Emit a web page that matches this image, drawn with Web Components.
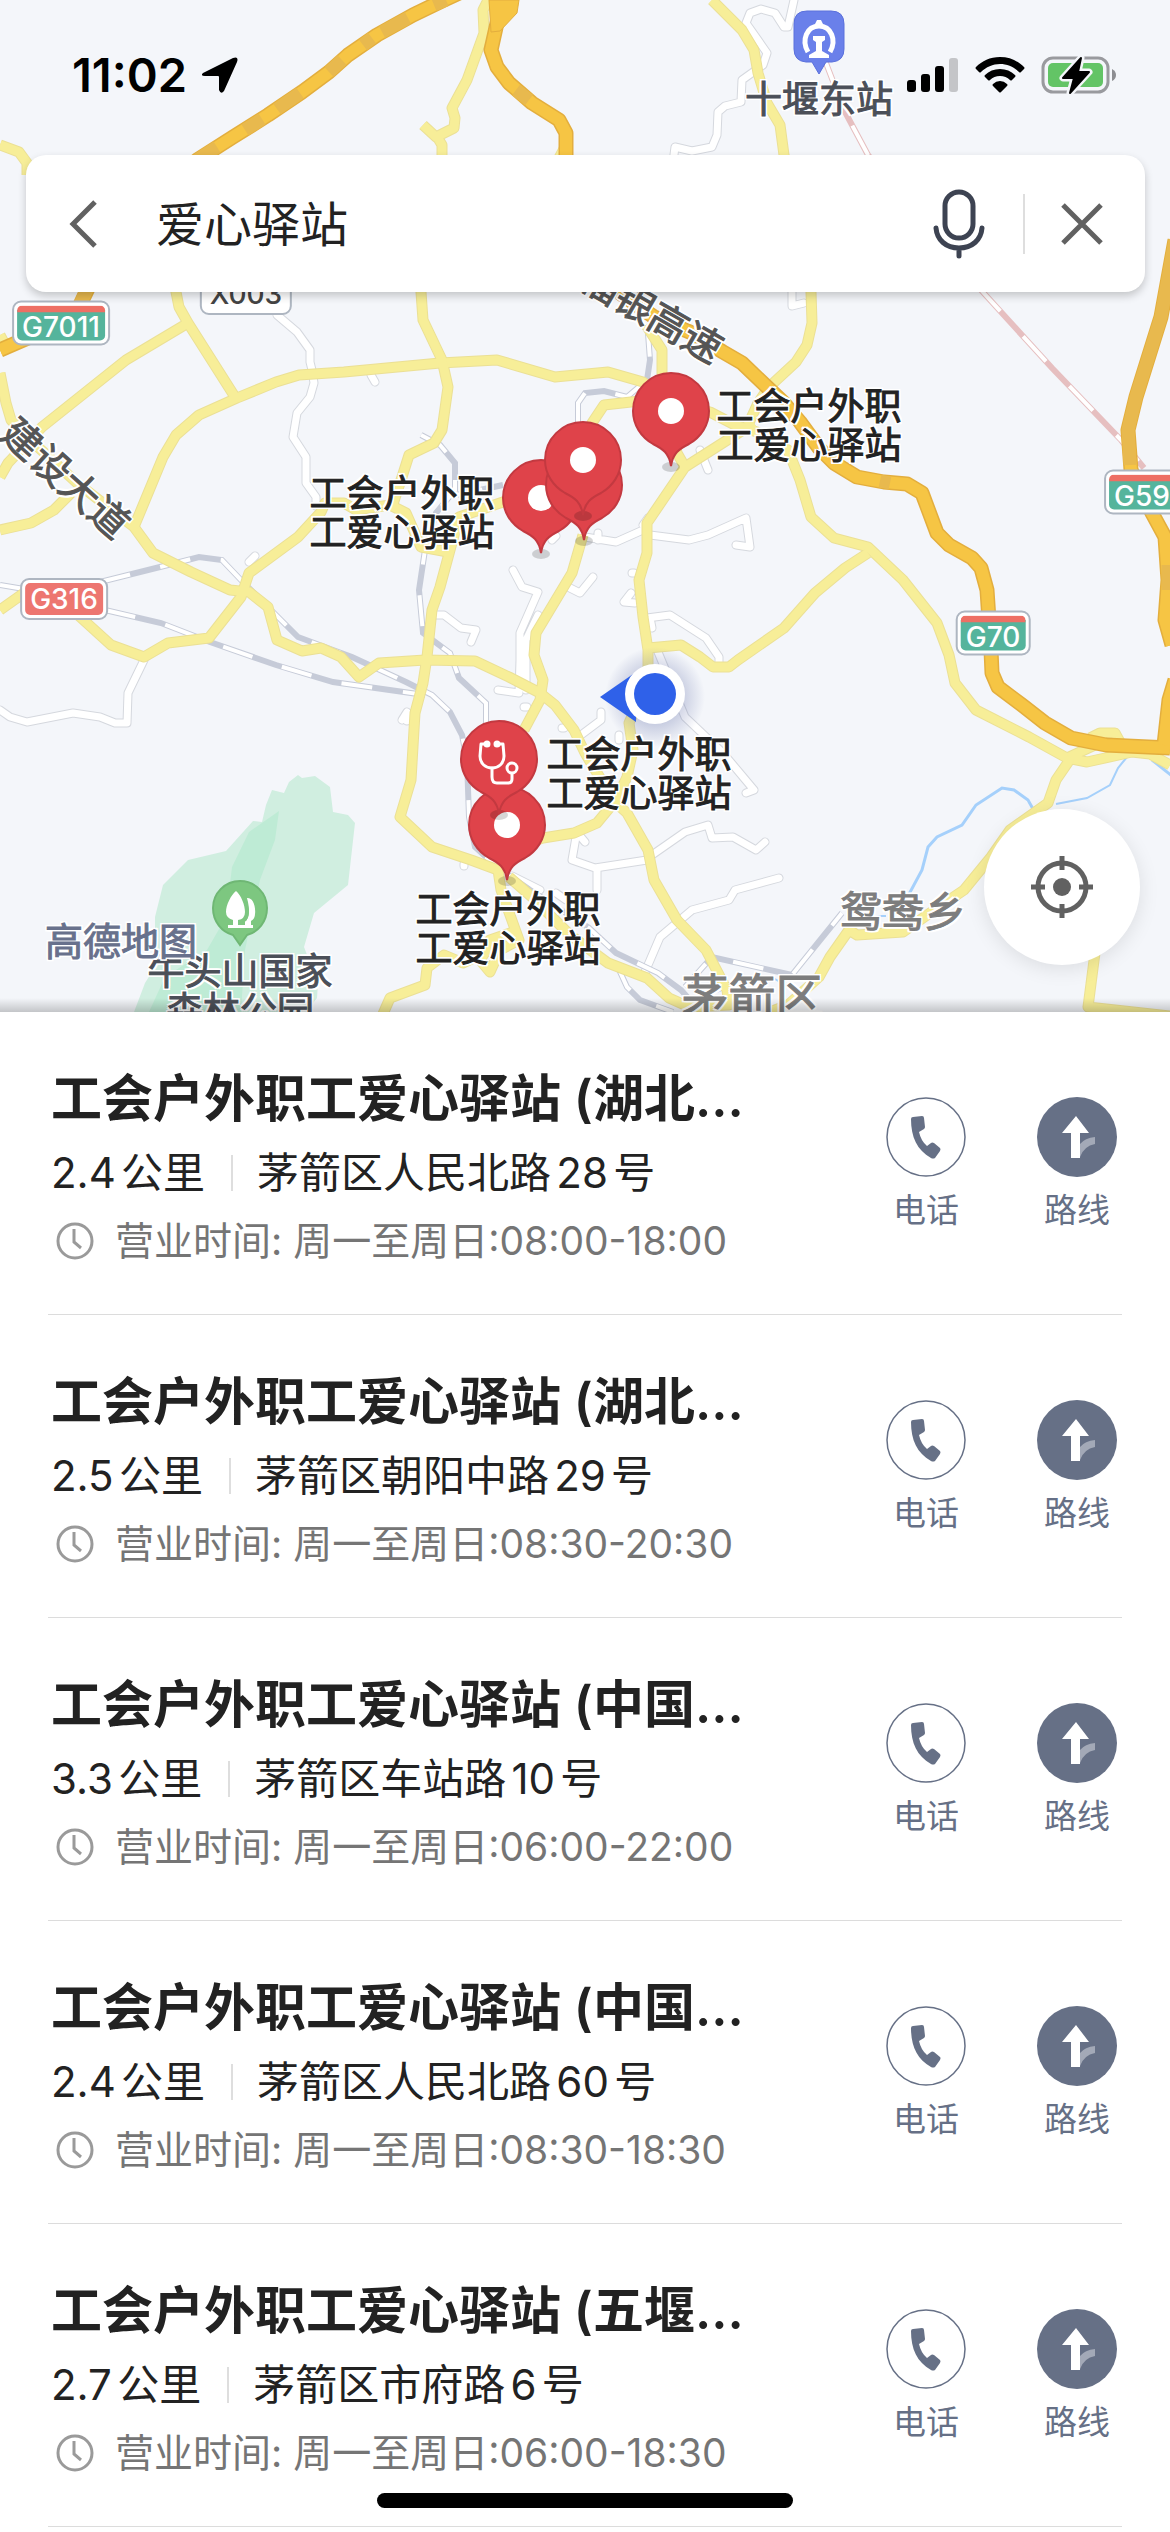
<!DOCTYPE html>
<html lang="zh-CN">
<head>
<meta charset="utf-8">
<meta name="viewport" content="width=device-width, initial-scale=1">
<title>爱心驿站</title>
<style>
    html {
        background: #fff;
    }

    body {
        margin: 0;
        font-family: Inter, "Noto Sans CJK SC", sans-serif;
        color: #222;
    }
</style>
</head>
<body>
<nearby-app></nearby-app>

<template id="map-art">
    <svg viewBox="0 0 1170 1012" preserveAspectRatio="xMidYMin slice" aria-hidden="true">
        <defs>
            <g id="lanes">
                <path d="M794 0L788 27H784L775 13L761 9L750 13L746 23L767 53L763 65L742 80L741 102L725 106L718 112L717 135L712 147L692 151L675 147L672 170"/>
                <path d="M792 270V306L804 303"/>
                <path d="M277 315L297 332L310 350V362L312 370L314 383L310 397L297 413L293 437L306 457V483L316 497V506"/>
                <path d="M371 375L375 382"/>
                <path d="M513 570L522 587L538 592L520 633V660L519 693L498 690M538 615L526 640V690M527 707H524"/>
                <path d="M570 588L580 593L593 577M552 540L556 536"/>
                <path d="M436 615H444L461 628L476 630L471 642M402 720L407 712V721"/>
                <path d="M144 660L128 693L127 723H115L100 717L73 713L27 722L10 717L0 710"/>
                <path d="M585 537L616 542L643 530L650 535L689 540L708 535L746 518L750 547L736 545M598 533V540M700 450L708 470M643 525L648 518"/>
                <path d="M647 618L670 615L706 638L719 657V667M650 618L652 628M631 593L624 602L635 603M634 573H632"/>
                <path d="M658 652L685 717L723 753L754 790L746 793M581 735L601 720V712M619 740V735M562 728H564"/>
                <path d="M652 855L685 832L708 825L712 838L733 837L756 850L765 842"/>
                <path d="M645 972L660 937L692 910L729 900L735 890L779 878"/>
                <path d="M576 837L572 860L595 868L647 860M597 868V890M580 836L585 842M464 864V866M512 876L540 890M556 893L566 900M249 562L255 556"/>
            </g>
            <g id="rails">
                <path d="M0 585L24 589M100 582L168 565L199 557L222 560L241 580L268 607L298 637L333 650L352 657L406 682L432 695L450 712L462 735L467 760L469 817L475 847L497 867L530 890L589 928L616 953L658 973L681 990L690 1000"/>
                <path d="M105 610L161 623L210 642L276 665L333 682L425 695"/>
                <path d="M421 435L440 445L455 463V490L436 513L425 550L419 590L423 633L450 653L459 678L486 703V723M452 496L503 485"/>
                <path d="M578 422V403L585 393L604 391L627 397L647 380L650 360L648 333"/>
                <path d="M685 987L712 957L792 975L842 913M616 963L627 987L640 1000L673 1012"/>
            </g>
            <g id="roads">
                <path d="M488 0L483 10L484 33L467 80L452 108L455 118L454 128L436 137L423 125M436 135L442 145V165"/>
                <path d="M0 145L19 152L27 163V175M559 158L566 145"/>
                <path d="M712 0L742 30L754 50L758 73L767 103L780 125L784 155L800 230L811 292L812 323L807 345L796 362L769 387L758 403L748 425"/>
                <path d="M172 270L176 292L179 307L188 323L235 397M188 323L126 360L42 427L8 463L0 477M0 530L31 523L54 510L71 493M0 335L8 350"/>
                <path d="M0 373L6 403L11 420L38 447L77 483L134 527L153 553L191 572L230 590L249 592L268 607L277 640L302 651L321 648L341 657L359 677L379 663L425 660L475 661L509 677L540 693L555 705L574 730L585 753L597 773L616 803L627 813L648 850L654 880L677 920L706 950L727 990L729 1005L690 1007"/>
                <path d="M0 610L24 593M78 615L111 645L144 657L168 643L209 638L241 597L249 573L298 537L321 512L325 503H344L356 510L390 505L406 513L421 547L448 552"/>
                <path d="M134 527L163 457L176 435L199 415L237 398L276 382L299 375L344 372L440 363L497 360L555 377L608 372L643 382L665 400L710 412L735 425L757 432L788 450L800 480L811 517L834 538L868 547L903 580L937 623L949 655L955 683L976 710L1029 737L1067 758L1087 762L1132 752L1150 754L1170 765M1067 758L1095 745"/>
                <path d="M421 280V292L423 320L442 360L448 387L442 430L434 443L409 455L402 477L392 507"/>
                <path d="M560 480L503 502L459 517L450 550L440 587L432 610L427 657L423 683L415 713L411 780L400 817L432 847L471 860L498 870L501 890L519 940L500 950L490 972L480 960L490 945V940L519 930"/>
                <path d="M509 877L532 897L570 935L608 963L647 978L669 998L696 1010"/>
                <path d="M480 955L463 963L444 955L427 968L425 985L390 998L383 1014"/>
                <path d="M583 535L572 573L536 633L534 655L543 680L540 700L524 730"/>
                <path d="M583 490L592 423L604 405L640 401"/>
                <path d="M646 325L662 350V373L677 453L685 467L754 423M685 467L647 523V553L639 580L643 617L648 650V680L629 723L633 750L627 777L616 800L597 823L574 833L543 838L520 845"/>
                <path d="M648 648L681 645L700 657L713 667H729L738 660L784 628L815 593L845 568L868 553"/>
                <path d="M1071 758L1056 780L1048 803L1010 830L991 857L964 890L930 913L903 932L857 935L849 930L830 957L819 977L788 1005L770 1012"/>
                <path d="M1096 945L1088 1007L1170 1016M1090 738L1100 733H1115L1120 742"/>
            </g>
            <g id="highways">
                <path d="M80 305L92 280L197 160L233 137L268 115L302 92L329 72L348 55L377 35L413 15L444 0L470 -12"/>
                <path d="M0 350L30 337"/>
                <path d="M503 -5L497 23L491 50L497 67L509 83L532 103L559 120L566 133V160L580 250L620 293L654 317L692 333L723 352L742 363L765 385L784 403L800 422L819 448L834 463L857 477L884 482L907 484L922 493L937 533L949 545L972 558L981 568L987 590L991 650L992 673L998 687L1022 705L1045 723L1071 738L1106 745L1170 748"/>
                <path d="M1175 240L1161 317L1136 397L1128 430L1131 470L1152 513L1165 537L1168 580L1165 620L1172 645M1175 680L1169 700L1164 745"/>
            </g>
            <path id="express-rail" d="M826 63L844 110L868 155L981 290L1052 368L1121 440L1144 468"/>
        </defs>

        <rect width="1170" height="1012" fill="#f4f6fa"/>
        <path fill="#d0eee0" d="M298 775L302 778L315 776L330 787L333 812L348 815L355 823L348 885L314 913L304 947L318 983L317 998L306 1012H134L145 983L155 967V917L163 885L188 860L226 851L253 821L262 822L266 805L272 790L284 793L289 782Z"/>
        <path fill="#beebd5" d="M279 811L275 840L260 880L245 950L241 1012H149L165 977L207 950L226 917L232 867L249 832Z"/>
        <g fill="none" stroke="#a5d0fb" stroke-width="3">
            <path d="M908 896L922 870L928 847L937 837L962 825L976 805L1002 788L1014 790L1028 800L1033 809"/>
            <path stroke-width="2" d="M1056 804L1087 798L1110 785L1118 768L1127 757M870 916H886M775 979L780 982M714 993L724 989"/>
            <path d="M1152 760L1172 776"/>
        </g>
        <g fill="none" stroke-linejoin="round" stroke-linecap="round">
            <use href="#lanes" stroke="#d5d8de" stroke-width="9"/>
            <use href="#lanes" stroke="#fff" stroke-width="7"/>
        </g>
        <g fill="none">
            <use href="#rails" stroke="#c6cbd8" stroke-width="6"/>
            <use href="#rails" stroke="#fff" stroke-width="4" stroke-dasharray="31 31"/>
            <use href="#express-rail" stroke="#e6bfc0" stroke-width="6"/>
            <use href="#express-rail" stroke="#fff" stroke-width="4" stroke-dasharray="34 34"/>
        </g>
        <g fill="none" stroke-linejoin="round">
            <use href="#roads" stroke="#ebe095" stroke-width="11"/>
            <use href="#roads" stroke="#f7ee98" stroke-width="9"/>
            <use href="#highways" stroke="#e3ae3e" stroke-width="15"/>
            <use href="#highways" stroke="#f6c544" stroke-width="12"/>
        </g>
        <path fill="#f6c544" stroke="#e3ae3e" d="M489 0H519L517 13L500 31L491 32Z"/>
        <g fill="none" stroke="#e8b94e" stroke-width="13">
            <path d="M197 160L217 147M245 130L262 119M277 109L300 93M329 72L342 60M363 45L372 38M382 32L408 18M434 5L446 0"/>
            <path d="M516 90L529 100M880 481L890 483M80 305L88 285M1175 240L1161 317L1136 397L1128 430L1130 465M1168 565V590"/>
        </g>
    </svg>
</template>

<script>
    // Map items are given in the units of the map drawing.
    const MAP_WIDTH = 1170;
    const MAP_HEIGHT = 1012;

    const PLACES = [
        {name: '工会户外职工爱心驿站 (湖北...', distance: '2.4公里', address: '茅箭区人民北路28号', hours: '08:00-18:00'},
        {name: '工会户外职工爱心驿站 (湖北...', distance: '2.5公里', address: '茅箭区朝阳中路29号', hours: '08:30-20:30'},
        {name: '工会户外职工爱心驿站 (中国...', distance: '3.3公里', address: '茅箭区车站路10号', hours: '06:00-22:00'},
        {name: '工会户外职工爱心驿站 (中国...', distance: '2.4公里', address: '茅箭区人民北路60号', hours: '08:30-18:30'},
        {name: '工会户外职工爱心驿站 (五堰...', distance: '2.7公里', address: '茅箭区市府路6号', hours: '06:00-18:30'}
    ];

    // Base for everything that is pinned to a point of the map.
    class MapItem extends HTMLElement {
        connectedCallback(){
            this.style.left = `${this.getAttribute('x') / MAP_WIDTH * 100}%`;
            this.style.top = `${this.getAttribute('y') / MAP_HEIGHT * 100}%`;
        }
    }

    class MapLabel extends MapItem {
        constructor(){
            super();
            this.attachShadow({mode: 'open'});
            this.shadowRoot.innerHTML = `
            <style>
                :host {
                    position: absolute;
                    transform: translate(-50%, -50%) rotate(var(--turn, 0deg));
                    font-size: 37px;
                    line-height: 39px;
                    color: #222;
                    text-align: center;
                    white-space: nowrap;
                    -webkit-text-stroke: 1px currentColor;
                    text-shadow: 2px 0 #fff, -2px 0 #fff, 0 2px #fff, 0 -2px #fff,
                        2px 2px #fff, -2px 2px #fff, 2px -2px #fff, -2px -2px #fff;
                }

                :host([kind=place]) {
                    color: #4b4f58;
                }

                :host([kind=road]) {
                    color: #555;
                    font-size: 39px;
                }

                :host([kind=town]) {
                    color: #7d7d7d;
                    font-size: 42px;
                }

                :host([kind=district]) {
                    color: #7d7d7d;
                    font-size: 47px;
                }

                :host([kind=brand]) {
                    color: #68718c;
                    font-size: 38px;
                }
            </style>
            <slot></slot>`;
        }
    }

    class MapPin extends MapItem {
        constructor(){
            super();
            this.attachShadow({mode: 'open'});
            this.shadowRoot.innerHTML = `
            <style>
                :host {
                    position: absolute;
                    width: 80px;
                    height: 102px;
                    transform: translate(-50%, -96px);
                }

                svg {
                    display: block;
                }

                :host([icon=care]) .dot {
                    display: none;
                }

                :host(:not([icon=care])) .care {
                    display: none;
                }
            </style>
            <svg width="80" height="102" viewBox="0 0 80 102" aria-hidden="true">
                <ellipse cx="40" cy="96" rx="9" ry="5" fill="#000" fill-opacity=".16"/>
                <path fill="#df434a" stroke="#c33940" stroke-width="2" d="M40 95C38 82 32 78 22 73C10 66 2 54 2 40A38 38 0 0 1 78 40C78 54 70 66 58 73C48 78 42 82 40 95Z"/>
                <circle class="dot" cx="40" cy="40" r="13" fill="#fff"/>
                <g class="care" fill="none" stroke="#fff" stroke-width="3" stroke-linecap="round" stroke-linejoin="round">
                    <path d="M27 25H22L21 37C21 45 27 49 33 49S45 45 45 37L44 25H39"/>
                    <circle cx="28" cy="25" r="2" fill="#fff"/>
                    <circle cx="38" cy="25" r="2" fill="#fff"/>
                    <path d="M33 49V58Q33 64 38 64H49Q53 64 53 60V55"/>
                    <circle cx="53" cy="49" r="5"/>
                </g>
            </svg>`;
        }
    }

    class RoadShield extends MapItem {
        constructor(){
            super();
            this.attachShadow({mode: 'open'});
            this.shadowRoot.innerHTML = `
            <style>
                :host {
                    position: absolute;
                    transform: translate(-50%, -50%);
                    padding: 3px;
                    border: 2px solid #aeb6c1;
                    border-radius: 9px;
                    background: #fff;
                }

                span {
                    display: block;
                    padding: 0 5px;
                    border-radius: 5px;
                    font-size: 28px;
                    line-height: 32px;
                    font-weight: 500;
                    color: #fff;
                    background: #ed7670;
                }

                :host([kind=express]) span {
                    border-top: 7px solid #ee6f64;
                    line-height: 28px;
                    background: #55b49c;
                }

                :host([kind=county]) span {
                    color: #444;
                    background: #fff;
                }
            </style>
            <span><slot></slot></span>`;
        }
    }

    class MapSpot extends MapItem {
        constructor(){
            super();
            this.attachShadow({mode: 'open'});
            this.shadowRoot.innerHTML = `
            <style>
                :host {
                    position: absolute;
                    transform: translate(-50%, -50%);
                }

                ::slotted(svg) {
                    display: block;
                }
            </style>
            <slot></slot>`;
        }
    }

    class MapView extends HTMLElement {
        constructor(){
            super();
            this.attachShadow({mode: 'open'});
            this.shadowRoot.innerHTML = `
            <style>
                :host {
                    display: block;
                    position: relative;
                    overflow: hidden;
                    aspect-ratio: ${MAP_WIDTH} / ${MAP_HEIGHT};
                }

                .art > svg {
                    display: block;
                    width: 100%;
                }

                .edge {
                    position: absolute;
                    inset: auto 0 0;
                    height: 14px;
                    background: linear-gradient(transparent, rgba(0,0,0,0.2));
                }

                button {
                    display: grid;
                    place-items: center;
                    width: 156px;
                    height: 156px;
                    padding: 0;
                    border: 0;
                    border-radius: 50%;
                    background: #fff;
                    box-shadow: 0 4px 20px rgba(0,0,0,0.1);
                }
            </style>
            <div class="art"></div>
            <map-label kind="road" x="66" y="478" style="--turn: 42deg">建设大道</map-label>
            <map-label kind="road" x="652" y="313" style="--turn: 30deg">福银高速</map-label>
            <road-shield kind="express" x="61" y="323">G7011</road-shield>
            <road-shield kind="county" x="246" y="294">X003</road-shield>
            <road-shield x="64" y="599">G316</road-shield>
            <road-shield kind="express" x="1142" y="492">G59</road-shield>
            <road-shield kind="express" x="993" y="633">G70</road-shield>
            <map-label kind="town" x="903" y="911">鸳鸯乡</map-label>
            <map-label kind="district" x="752" y="995">茅箭区</map-label>
            <map-label kind="place" x="819" y="99">十堰东站</map-label>
            <map-spot x="819" y="43">
                <svg width="52" height="66" viewBox="0 0 52 66" aria-hidden="true">
                    <path fill="#6a80ea" stroke="#5a70dc" d="M14 1H38Q51 1 51 14V39Q51 51 39 52H33L26 64L19 52H13Q1 51 1 39V14Q1 1 14 1Z"/>
                    <path fill="none" stroke="#fff" stroke-width="5" d="M15 42C8 30 14 16 26 16S44 30 37 42"/>
                    <path fill="#fff" d="M21 16L24 10H28L31 16ZM20 26H32V30L29 32V41L36 45V48H16V45L23 41V32L20 30Z"/>
                </svg>
            </map-spot>
            <map-label kind="place" x="240" y="991">牛头山国家<br>森林公园</map-label>
            <map-label kind="brand" x="121" y="941">高德地图</map-label>
            <map-spot x="240" y="913">
                <svg width="56" height="68" viewBox="0 0 56 68" aria-hidden="true">
                    <path fill="#7dc780" stroke="#6fb774" stroke-width="2" d="M28 66L21 56C10 53 1 43 1 29A27 27 0 0 1 55 29C55 43 46 53 35 56Z"/>
                    <path fill="#fff" d="M24 12C29 16 33 26 33 33Q33 40 26 41V46H33V42C38 40 38 30 35 19C41 18 44 28 43 35Q43 40 39 42V46H41V49H16V46H21V41Q14 39 14 33C14 26 19 16 24 12Z"/>
                    <path fill="none" stroke="#7dc780" stroke-width="2" d="M32 19C36 27 37 36 33 42"/>
                </svg>
            </map-spot>
            <map-spot x="649" y="694">
                <svg width="140" height="120" viewBox="0 0 140 120" aria-hidden="true">
                    <radialGradient id="glow">
                        <stop offset=".5" stop-color="#5562a0" stop-opacity=".3"/>
                        <stop offset="1" stop-color="#5562a0" stop-opacity="0"/>
                    </radialGradient>
                    <circle cx="76" cy="63" r="50" fill="url(#glow)"/>
                    <path fill="#2f61e9" d="M21 63L57 38V88Z"/>
                    <circle cx="76" cy="60" r="30" fill="#fff"/>
                    <circle cx="76" cy="60" r="21" fill="#2f61e9"/>
                </svg>
            </map-spot>
            <map-pin x="541" y="554"></map-pin>
            <map-pin x="584" y="541"></map-pin>
            <map-pin x="583" y="516"></map-pin>
            <map-pin x="671" y="467"></map-pin>
            <map-pin x="507" y="881"></map-pin>
            <map-pin x="499" y="815" icon="care"></map-pin>
            <map-label x="809" y="426">工会户外职<br>工爱心驿站</map-label>
            <map-label x="402" y="513">工会户外职<br>工爱心驿站</map-label>
            <map-label x="639" y="774">工会户外职<br>工爱心驿站</map-label>
            <map-label x="508" y="929">工会户外职<br>工爱心驿站</map-label>
            <map-spot x="1062" y="887">
                <button type="button" aria-label="定位">
                    <svg width="64" height="64" viewBox="0 0 64 64" fill="none" stroke="#616161" stroke-width="5" aria-hidden="true">
                        <circle cx="32" cy="32" r="24"/>
                        <path d="M32 1V15M32 49V63M1 32H15M49 32H63"/>
                        <circle cx="32" cy="32" r="9" fill="#616161" stroke="none"/>
                    </svg>
                </button>
            </map-spot>
            <div class="edge"></div>`;
            const art = document.querySelector('#map-art').content.cloneNode(true);
            this.shadowRoot.querySelector('.art').appendChild(art);
        }
    }

    class StatusBar extends HTMLElement {
        constructor(){
            super();
            this.attachShadow({mode: 'open'});
            this.shadowRoot.innerHTML = `
            <style>
                :host {
                    display: flex;
                    align-items: center;
                    height: 149px;
                    padding: 0 53px 0 72px;
                    color: #000;
                }

                time {
                    font-size: 47px;
                    line-height: 56px;
                    font-weight: 600;
                }

                .arrow {
                    margin: 0 auto 0 14px;
                }

                .signal,
                .wifi {
                    margin-right: 16px;
                }
            </style>
            <time>11:02</time>
            <svg class="arrow" width="38" height="38" viewBox="0 0 38 38" aria-hidden="true">
                <path d="M2 17L32 2Q38 0 36 6L23 35Q20 39 18 34V21Q18 20 17 20H4Q-1 20 2 17Z"/>
            </svg>
            <svg class="signal" width="52" height="36" viewBox="0 0 52 36" aria-hidden="true">
                <rect y="23" width="9" height="12" rx="3"/>
                <rect x="14" y="17" width="9" height="18" rx="3"/>
                <rect x="28" y="9" width="9" height="26" rx="3"/>
                <rect x="42" y="1" width="9" height="34" rx="3" fill="#c4c5c8"/>
            </svg>
            <svg class="wifi" width="50" height="38" viewBox="0 0 50 38" aria-hidden="true">
                <path d="M25 1C35 1 43 5 49 11Q50 12 49 13L46 16Q45 17 44 16C39 11 32 8 25 8S11 11 6 16Q5 17 4 16L1 13Q0 12 1 11C7 5 15 1 25 1ZM25 13C31 13 36 15 40 19Q41 20 40 21L37 24Q36 25 35 24Q31 20 25 20T15 24Q14 25 13 24L10 21Q9 20 10 19C14 15 19 13 25 13ZM25 25Q29 25 32 28Q33 29 32 30L26 36Q25 37 24 36L18 30Q17 29 18 28Q21 25 25 25Z"/>
            </svg>
            <svg width="76" height="44" viewBox="0 0 76 44" aria-hidden="true">
                <rect x="2" y="5" width="65" height="34" rx="10" fill="none" stroke="#999a9e" stroke-width="3"/>
                <path fill="#8d8e92" d="M71 16Q75 18 75 22T71 28Z"/>
                <rect x="7" y="10" width="55" height="24" rx="5" fill="#63c466"/>
                <path stroke="#f4f6fa" stroke-width="7" stroke-linejoin="round" d="M40 5L22 25H33L29 40L48 19H37Z"/>
                <path stroke="#000" stroke-width="2" stroke-linejoin="round" d="M40 5L22 25H33L29 40L48 19H37Z"/>
            </svg>`;
        }
    }

    class SearchBar extends HTMLElement {
        constructor(){
            super();
            this.attachShadow({mode: 'open'});
            this.shadowRoot.innerHTML = `
            <style>
                :host {
                    display: flex;
                    align-items: center;
                    height: 137px;
                    margin: 6px 25px 0 26px;
                    padding-right: 6px;
                    box-sizing: border-box;
                    border-radius: 20px;
                    background: #fff;
                    box-shadow: 0 4px 8px rgba(0,0,0,0.2);
                }

                button {
                    display: grid;
                    place-items: center;
                    flex: none;
                    width: 114px;
                    height: 100%;
                    padding: 0;
                    border: 0;
                    background: none;
                }

                .voice {
                    width: 128px;
                }

                input {
                    flex: 1;
                    min-width: 0;
                    height: 80px;
                    padding: 0 16px 6px;
                    box-sizing: border-box;
                    border: 0;
                    outline: 0;
                    background: none;
                    font: inherit;
                    font-size: 48px;
                    color: #222;
                }

                i {
                    width: 2px;
                    height: 60px;
                    background: #dedede;
                }
            </style>
            <button type="button" aria-label="返回">
                <svg width="30" height="50" viewBox="0 0 30 50" fill="none" stroke="#616161" stroke-width="5" aria-hidden="true">
                    <path d="M27 3L5 25L27 47"/>
                </svg>
            </button>
            <input type="text" aria-label="搜索" value="爱心驿站">
            <button class="voice" type="button" aria-label="语音">
                <svg width="52" height="70" viewBox="0 0 52 70" fill="none" stroke="#3d4352" stroke-width="5" stroke-linecap="round" aria-hidden="true">
                    <rect x="12" y="3" width="28" height="46" rx="14"/>
                    <path d="M3 39C4 51 13 59 26 59S48 51 49 39M26 59V67"/>
                </svg>
            </button>
            <i></i>
            <button type="button" aria-label="清除">
                <svg width="42" height="42" viewBox="0 0 42 42" fill="none" stroke="#616161" stroke-width="5" aria-hidden="true">
                    <path d="M2 2L40 40M40 2L2 40"/>
                </svg>
            </button>`;
        }
    }

    class IconAction extends HTMLElement {
        constructor(){
            super();
            this.attachShadow({mode: 'open'});
            this.shadowRoot.innerHTML = `
            <style>
                :host {
                    display: block;
                }

                button {
                    display: flex;
                    flex-direction: column;
                    align-items: center;
                    gap: 11px;
                    width: 80px;
                    padding: 0;
                    border: 0;
                    background: none;
                    font: inherit;
                    font-size: 33px;
                    line-height: 44px;
                    color: #667086;
                }

                svg {
                    display: block;
                }

                :host([kind=call]) .route,
                :host([kind=route]) .call {
                    display: none;
                }
            </style>
            <button type="button">
                <svg class="call" width="80" height="80" viewBox="0 0 80 80" aria-hidden="true">
                    <circle cx="40" cy="40" r="39" fill="none" stroke="#667086" stroke-width="1.5"/>
                    <path fill="#667086" d="M27 20L36 19Q38 19 38 21L39 30Q39 31 38 32L33 35Q35 44 41 49L45 46Q46 45 48 46L54 51Q55 52 54 54L49 61Q47 62 45 61C31 53 25 40 25 22Q25 20 27 20Z"/>
                </svg>
                <svg class="route" width="80" height="80" viewBox="0 0 80 80" aria-hidden="true">
                    <circle cx="40" cy="40" r="40" fill="#667086"/>
                    <path fill="#a3a9b7" d="M43 47Q48 41 58 40V47Q47 49 43 60Z"/>
                    <path fill="#fff" d="M39 19L52 36H43V61H34V36H25Z"/>
                </svg>
                <slot></slot>
            </button>`;
        }
    }

    class PlaceCard extends HTMLElement {
        constructor(){
            super();
            this.attachShadow({mode: 'open'});
            this.shadowRoot.innerHTML = `
            <style>
                :host {
                    display: flex;
                    justify-content: space-between;
                    margin: 0 48px;
                    padding: 53px 5px 45px 3px;
                    border-bottom: 1px solid #dcdcdc;
                }

                .info {
                    display: flex;
                    flex-direction: column;
                    gap: 12px;
                    min-width: 0;
                }

                h2 {
                    margin: 0;
                    font-size: 51px;
                    line-height: 68px;
                    font-weight: 600;
                    white-space: nowrap;
                }

                p {
                    display: flex;
                    align-items: center;
                    margin: 0;
                    font-size: 42px;
                    line-height: 56px;
                    white-space: nowrap;
                    text-autospace: normal;
                }

                .distance {
                    margin-right: 24px;
                    padding-right: 26px;
                    line-height: 36px;
                    border-right: 2px solid #dedede;
                }

                .hours {
                    gap: 21px;
                    font-size: 39px;
                    color: #757575;
                    text-autospace: no-autospace;
                }

                .hours svg {
                    margin-left: 5px;
                }

                .actions {
                    display: flex;
                    gap: 71px;
                    padding-top: 32px;
                }
            </style>
            <div class="info">
                <h2><slot name="name"></slot></h2>
                <p><span class="distance"><slot name="distance"></slot></span><slot name="address"></slot></p>
                <p class="hours">
                    <svg width="38" height="38" viewBox="0 0 38 38" fill="none" stroke="#9a9a9a" stroke-width="3" aria-hidden="true">
                        <circle cx="19" cy="19" r="17"/>
                        <path d="M18 7V20L25 26"/>
                    </svg>
                    <slot name="hours"></slot>
                </p>
            </div>
            <div class="actions">
                <icon-action kind="call">电话</icon-action>
                <icon-action kind="route">路线</icon-action>
            </div>`;
        }
    }

    class NearbyApp extends HTMLElement {
        constructor(){
            super();
            this.attachShadow({mode: 'open'});
            this.shadowRoot.innerHTML = `
            <style>
                :host {
                    display: block;
                    height: 100vh;
                    overflow: hidden auto;
                    scrollbar-width: none;
                }

                header {
                    position: absolute;
                    inset: 0 0 auto;
                }

                .home {
                    position: fixed;
                    left: 50%;
                    bottom: 24px;
                    width: 416px;
                    height: 15px;
                    border-radius: 8px;
                    background: #000;
                    transform: translateX(-50%);
                }
            </style>
            <map-view></map-view>
            <header>
                <status-bar></status-bar>
                <search-bar></search-bar>
            </header>
            <main>${PLACES.map(place => this._renderPlace(place)).join('')}</main>
            <div class="home"></div>`;
        }

        _renderPlace(place){
            return `
            <place-card>
                <span slot="name">${place.name}</span>
                <span slot="distance">${place.distance}</span>
                <span slot="address">${place.address}</span>
                <span slot="hours">营业时间: 周一至周日:${place.hours}</span>
            </place-card>`;
        }
    }

    customElements.define('map-label', MapLabel);
    customElements.define('map-pin', MapPin);
    customElements.define('road-shield', RoadShield);
    customElements.define('map-spot', MapSpot);
    customElements.define('map-view', MapView);
    customElements.define('status-bar', StatusBar);
    customElements.define('search-bar', SearchBar);
    customElements.define('icon-action', IconAction);
    customElements.define('place-card', PlaceCard);
    customElements.define('nearby-app', NearbyApp);
</script>
</body>
</html>
